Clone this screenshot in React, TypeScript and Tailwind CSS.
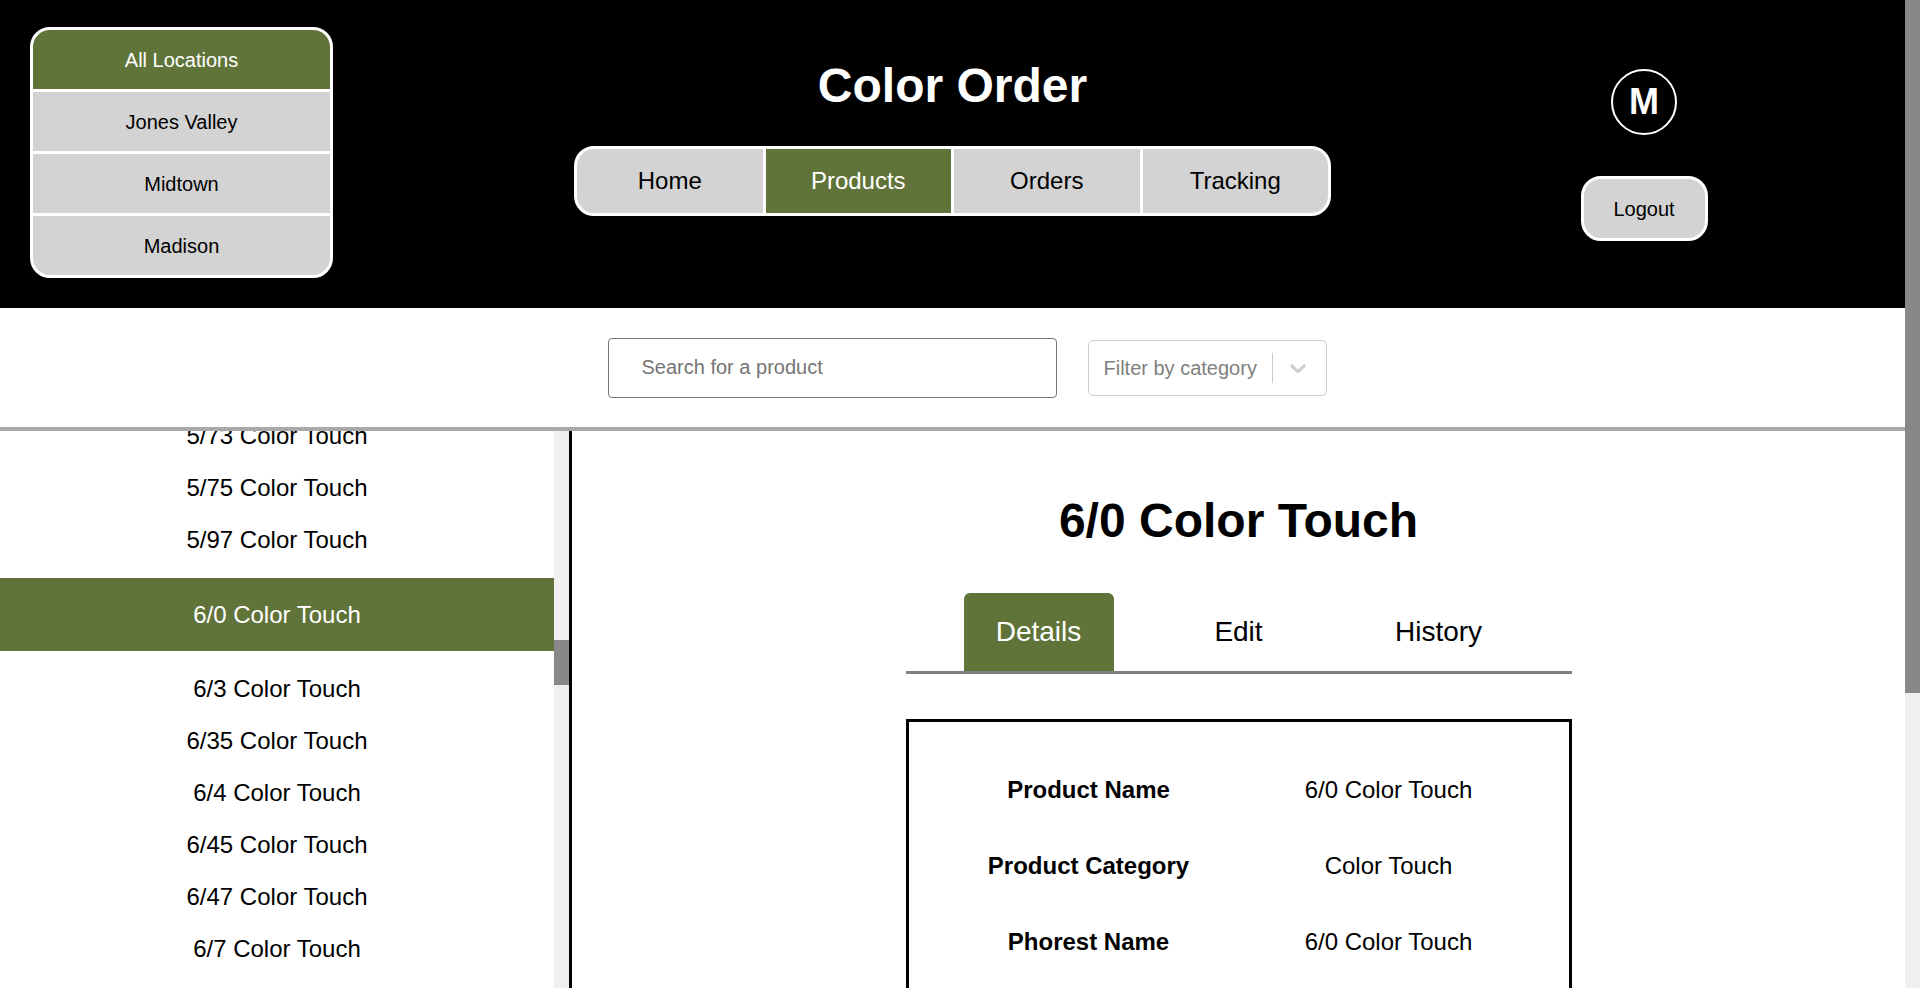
import React from "react";

const GREEN = "bg-[#607339]";

const locations = ["All Locations", "Jones Valley", "Midtown", "Madison"];
const navItems = ["Home", "Products", "Orders", "Tracking"];

const products = [
  "5/73 Color Touch",
  "5/75 Color Touch",
  "5/97 Color Touch",
  "6/0 Color Touch",
  "6/3 Color Touch",
  "6/35 Color Touch",
  "6/4 Color Touch",
  "6/45 Color Touch",
  "6/47 Color Touch",
  "6/7 Color Touch",
  "6/73 Color Touch",
  "6/75 Color Touch",
];

const details = [
  ["Product Name", "6/0 Color Touch"],
  ["Product Category", "Color Touch"],
  ["Phorest Name", "6/0 Color Touch"],
  ["Brand", "Wella"],
];

function LocationMenu() {
  return (
    <div className="flex w-[303px] flex-col gap-[3px] overflow-hidden rounded-[20px] border-[3px] border-white bg-white">
      {locations.map((loc, i) => (
        <div
          key={loc}
          className={
            i === 0
              ? `flex h-[59px] items-center justify-center ${GREEN} text-[20px] text-white`
              : "flex h-[59px] items-center justify-center bg-[#d3d3d3] text-[20px] text-black"
          }
        >
          {loc}
        </div>
      ))}
    </div>
  );
}

function MainNav() {
  return (
    <nav className="mt-[33px] flex h-[70px] w-[757px] gap-[3px] overflow-hidden rounded-[20px] border-[3px] border-white bg-white">
      {navItems.map((item) => (
        <div
          key={item}
          className={
            item === "Products"
              ? `flex flex-1 items-center justify-center ${GREEN} text-[24px] text-white`
              : "flex flex-1 items-center justify-center bg-[#d3d3d3] text-[24px] text-black"
          }
        >
          {item}
        </div>
      ))}
    </nav>
  );
}

function Header() {
  return (
    <header className="grid h-[308px] shrink-0 grid-cols-[1fr_auto_1fr] bg-black">
      <div className="pl-[30px] pt-[27px]">
        <LocationMenu />
      </div>
      <div className="flex flex-col items-center pt-[58px]">
        <h1 className="text-[48px] font-bold leading-[55px] text-white">Color Order</h1>
        <MainNav />
      </div>
      <div className="flex flex-col items-center pl-[52px] pt-[69px]">
        <div className="flex h-[66px] w-[66px] items-center justify-center rounded-full border-2 border-white text-[36px] font-bold text-white">
          M
        </div>
        <button className="mt-[41px] h-[65px] w-[127px] rounded-[20px] border-[3px] border-white bg-[#d3d3d3] text-[20px] text-black">
          Logout
        </button>
      </div>
    </header>
  );
}

function SearchBar() {
  return (
    <div className="flex h-[119px] shrink-0 items-center justify-center gap-[31px] pl-[29px]">
      <input
        className="h-[60px] w-[449px] rounded-[4px] border border-[#767676] px-[33px] text-[20px] text-black outline-none placeholder:text-[#757575]"
        placeholder="Search for a product"
      />
      <div className="flex h-[56px] w-[239px] items-center rounded-[5px] border border-[#cccccc] bg-white">
        <span className="pl-[15px] text-[20px] text-[#808080]">Filter by category</span>
        <span className="ml-[15px] h-[30px] w-px bg-[#cccccc]" />
        <svg viewBox="0 0 20 20" className="ml-[12px] h-[26px] w-[26px] fill-[#cccccc]">
          <path d="M4.516 7.548c0.436-0.446 1.043-0.481 1.576 0l3.908 3.747 3.908-3.747c0.533-0.481 1.141-0.446 1.574 0 0.436 0.445 0.408 1.197 0 1.615-0.406 0.418-4.695 4.502-4.695 4.502-0.217 0.223-0.502 0.335-0.787 0.335s-0.57-0.112-0.789-0.335c0 0-4.287-4.084-4.695-4.502s-0.436-1.17 0-1.615z" />
        </svg>
      </div>
    </div>
  );
}

function ProductList() {
  return (
    <div className="flex shrink-0">
      <div className="w-[554px] overflow-hidden">
        <ul className="-mt-[21px] flex flex-col">
          {products.map((p) =>
            p === "6/0 Color Touch" ? (
              <li
                key={p}
                className={`my-[12px] flex h-[73px] items-center justify-center ${GREEN} text-[24px] text-white`}
              >
                {p}
              </li>
            ) : (
              <li key={p} className="flex h-[52px] items-center justify-center text-[24px] text-black">
                {p}
              </li>
            )
          )}
        </ul>
      </div>
      {/* list scrollbar */}
      <div className="flex w-[15px] flex-col bg-[#f0f0f0]">
        <div className="mt-[209px] h-[45px] bg-[#888888]" />
      </div>
      <div className="w-[3px] bg-black" />
    </div>
  );
}

function ProductDetail() {
  return (
    <section className="flex flex-1 flex-col items-center pt-[62px]">
      <h2 className="text-[48px] font-bold leading-[55px] text-black">6/0 Color Touch</h2>
      <div className="mt-[45px] flex w-[666px] justify-center gap-[50px] border-b-[3px] border-[#808080]">
        <div className={`flex h-[78px] w-[150px] items-center justify-center rounded-t-[6px] ${GREEN} text-[28px] text-white`}>
          Details
        </div>
        <div className="flex h-[78px] w-[150px] items-center justify-center text-[28px] text-black">Edit</div>
        <div className="flex h-[78px] w-[150px] items-center justify-center text-[28px] text-black">History</div>
      </div>
      <div className="mt-[45px] h-[420px] w-[666px] shrink-0 border-[3px] border-black pt-[30px]">
        <div className="grid grid-cols-[300px_300px] justify-center">
          {details.map(([label, value]) => (
            <React.Fragment key={label}>
              <div className="flex h-[76px] items-center justify-center text-[24px] font-bold text-black">{label}</div>
              <div className="flex h-[76px] items-center justify-center text-[24px] text-black">{value}</div>
            </React.Fragment>
          ))}
        </div>
      </div>
    </section>
  );
}

export default function App() {
  return (
    <div className="flex h-[988px] overflow-hidden bg-white font-['Liberation_Sans',Arial,sans-serif]">
      <div className="flex min-w-0 flex-1 flex-col">
        <Header />
        <SearchBar />
        <div className="h-[4px] shrink-0 bg-[#a9a9a9]" />
        <main className="flex min-h-0 flex-1 overflow-hidden">
          <ProductList />
          <ProductDetail />
        </main>
      </div>
      {/* page scrollbar */}
      <div className="flex w-[15px] shrink-0 flex-col bg-[#f0f0f0]">
        <div className="h-[693px] bg-[#888888]" />
      </div>
    </div>
  );
}
